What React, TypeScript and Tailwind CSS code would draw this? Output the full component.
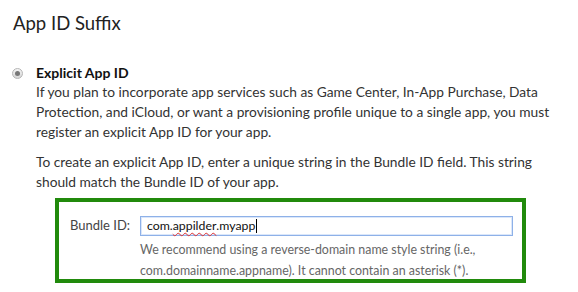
import React from "react";

export default function App() {
  const font = { fontFamily: '"Lato", "Open Sans", sans-serif' };
  return (
    <div className="w-[578px] h-[292px] bg-white overflow-hidden relative" style={font}>
      <div className="pl-[13px] pt-[12px]">
        <h1 className="text-[18.5px] leading-[22px] text-[#222]">App ID Suffix</h1>
      </div>
      <div className="pl-[12px] pt-[30px]">
        <div className="flex items-center gap-[13px]">
          <span className="w-[11px] h-[11px] rounded-full border border-[#b5b5b5] bg-gradient-to-b from-[#f4f4f4] to-[#d6d6d6] flex items-center justify-center">
            <span className="w-[5px] h-[5px] rounded-full bg-[#777]"></span>
          </span>
          <span className="text-[14px] font-bold text-[#111] leading-[18px]">Explicit App ID</span>
        </div>
        <div className="pl-[24px] pt-[0px] text-[13.75px] leading-[20px] text-[#333] whitespace-nowrap">
          <p>
            If you plan to incorporate app services such as Game Center, In-App Purchase, Data
            <br />
            Protection, and iCloud, or want a provisioning profile unique to a single app, you must
            <br />
            register an explicit App ID for your app.
          </p>
          <p className="pt-[10px]">
            To create an explicit App ID, enter a unique string in the Bundle ID field. This string
            <br />
            should match the Bundle ID of your app.
          </p>
        </div>
        <div className="ml-[43px] mt-[6px] w-[471px] h-[85px] border-[4px] border-[#218a0c] pl-[11px] pr-[9px] pt-[14px]">
          <div className="flex items-center">
            <span className="w-[70px] text-[13px] text-[#444]">Bundle ID:</span>
            <div className="flex-1 h-[20px] border border-[#8eb1e8] shadow-[inset_0_0_0_1px_#dbe7fa] flex items-center pl-[6px] text-[12.3px] text-[#111]">
              <span>com.</span>
              <span className="underline decoration-wavy decoration-[#e03030] decoration-1 underline-offset-2">appilder</span>
              <span>.myapp</span>
              <span className="w-px h-[14px] bg-black ml-px"></span>
            </div>
          </div>
          <div className="pl-[70px] pt-[3px] text-[12.4px] leading-[21px] text-[#666] whitespace-nowrap">
            We recommend using a reverse-domain name style string (i.e.,
            <br />
            com.domainname.appname). It cannot contain an asterisk (*).
          </div>
        </div>
      </div>
    </div>
  );
}
